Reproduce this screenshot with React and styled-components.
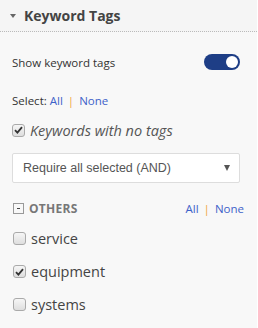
import styled, { createGlobalStyle } from "styled-components";

const Global = createGlobalStyle`
	html, body {
		margin: 0;
		padding: 0;
		background: #f8f8f8;
	}
	body {
		font-family: "Open Sans", "DejaVu Sans", sans-serif;
		color: #333;
	}
`;

const Panel = styled.div`
	width: 257px;
	height: 328px;
	background: #f8f8f8;
	border-right: 1px solid #fff;
	overflow: hidden;
`;

const Header = styled.div`
	height: 32px;
	display: flex;
	align-items: center;
	gap: 8px;
	padding-left: 10px;
	background: #f5f5f5;
	border-bottom: 1px dotted #bbb;
	box-sizing: border-box;

	.caret {
		width: 0;
		height: 0;
		border-left: 3.5px solid transparent;
		border-right: 3.5px solid transparent;
		border-top: 4px solid #666;
		margin-top: 1px;
	}

	h2 {
		margin: 0;
		font-size: 14px;
		font-weight: 700;
		color: #444;
	}
`;

const Body = styled.div`
	padding: 0 12px;
	display: flex;
	flex-direction: column;
`;

const Row = styled.div`
	display: flex;
	align-items: center;
	justify-content: space-between;
	height: ${(p) => p.$h || 32}px;
	font-size: 11.5px;
	color: #333;
`;

const Toggle = styled.div`
	width: 36px;
	height: 16px;
	border-radius: 8px;
	background: #1e3e86;
	display: flex;
	align-items: center;
	justify-content: flex-end;
	padding-right: 2px;
	box-sizing: border-box;
	margin-right: 5px;

	span {
		width: 12px;
		height: 12px;
		border-radius: 50%;
		background: #fff;
	}
`;

const Links = styled.span`
	a {
		color: #3e62c9;
		text-decoration: none;
	}
	.sep {
		color: #f0a640;
		margin: 0 5px;
	}
`;

const Box = styled.span`
	width: 13px;
	height: 13px;
	border: 1px solid #aaa;
	border-radius: 3px;
	background: linear-gradient(#f6f6f6, #dedede);
	box-sizing: border-box;
	display: flex;
	align-items: center;
	justify-content: center;
	flex-shrink: 0;
`;

const Check = ({ on }) => (
	<Box>
		{on && (
			<svg width="9" height="8" viewBox="0 0 9 8">
				<path d="M1 4.2 L3.4 6.6 L8 1.2" fill="none" stroke="#333" strokeWidth="1.8" />
			</svg>
		)}
	</Box>
);

const CheckRow = styled.label`
	display: flex;
	align-items: center;
	gap: 5px;
	height: ${(p) => (p.$italic ? 32 : 33)}px;
	padding-left: ${(p) => (p.$italic ? 0 : 1)}px;
	font-size: 14.5px;
	font-style: ${(p) => (p.$italic ? "italic" : "normal")};
	color: ${(p) => (p.$italic ? "#555" : "#444")};
`;

const Select = styled.div`
	height: 30px;
	width: 228px;
	margin: 7px 0 11px;
	background: #fff;
	border: 1px solid #ddd;
	border-radius: 2px;
	box-sizing: border-box;
	display: flex;
	align-items: center;
	justify-content: space-between;
	padding: 0 9px 0 10px;
	font-family: "Liberation Sans", Arial, sans-serif;
	font-size: 12.5px;
	color: #555;

	.arrow {
		width: 0;
		height: 0;
		border-left: 3.5px solid transparent;
		border-right: 3.5px solid transparent;
		border-top: 6px solid #555;
	}
`;

const Group = styled.div`
	display: flex;
	align-items: center;
	justify-content: space-between;
	height: 28px;
	padding-right: 1px;

	.title {
		display: flex;
		align-items: center;
		gap: 5px;
		font-size: 12px;
		font-weight: 700;
		color: #777;
		letter-spacing: 0.3px;
	}
	.minus {
		width: 11px;
		height: 11px;
		border: 1px solid #999;
		box-sizing: border-box;
		display: flex;
		align-items: center;
		justify-content: center;
		margin-left: 1px;
		span {
			width: 3px;
			height: 1px;
			background: #444;
		}
	}
	${Links} {
		font-size: 11.5px;
	}
`;

const tags = [
	{ name: "service", on: false },
	{ name: "equipment", on: true },
	{ name: "systems", on: false },
];

export default function App() {
	return (
		<Panel>
			<Global />
			<Header>
				<span className="caret" />
				<h2>Keyword Tags</h2>
			</Header>
			<Body>
				<Row $h={60}>
					<span>Show keyword tags</span>
					<Toggle>
						<span />
					</Toggle>
				</Row>
				<Row $h={16}>
					<span>
						Select:{" "}
						<Links>
							<a href="#">All</a>
							<span className="sep">|</span>
							<a href="#">None</a>
						</Links>
					</span>
				</Row>
				<CheckRow $italic style={{ marginTop: 6 }}>
					<Check on />
					Keywords with no tags
				</CheckRow>
				<Select>
					<span>Require all selected (AND)</span>
					<span className="arrow" />
				</Select>
				<Group>
					<span className="title">
						<span className="minus">
							<span />
						</span>
						OTHERS
					</span>
					<Links>
						<a href="#">All</a>
						<span className="sep">|</span>
						<a href="#">None</a>
					</Links>
				</Group>
				{tags.map((t) => (
					<CheckRow key={t.name}>
						<Check on={t.on} />
						{t.name}
					</CheckRow>
				))}
			</Body>
		</Panel>
	);
}
